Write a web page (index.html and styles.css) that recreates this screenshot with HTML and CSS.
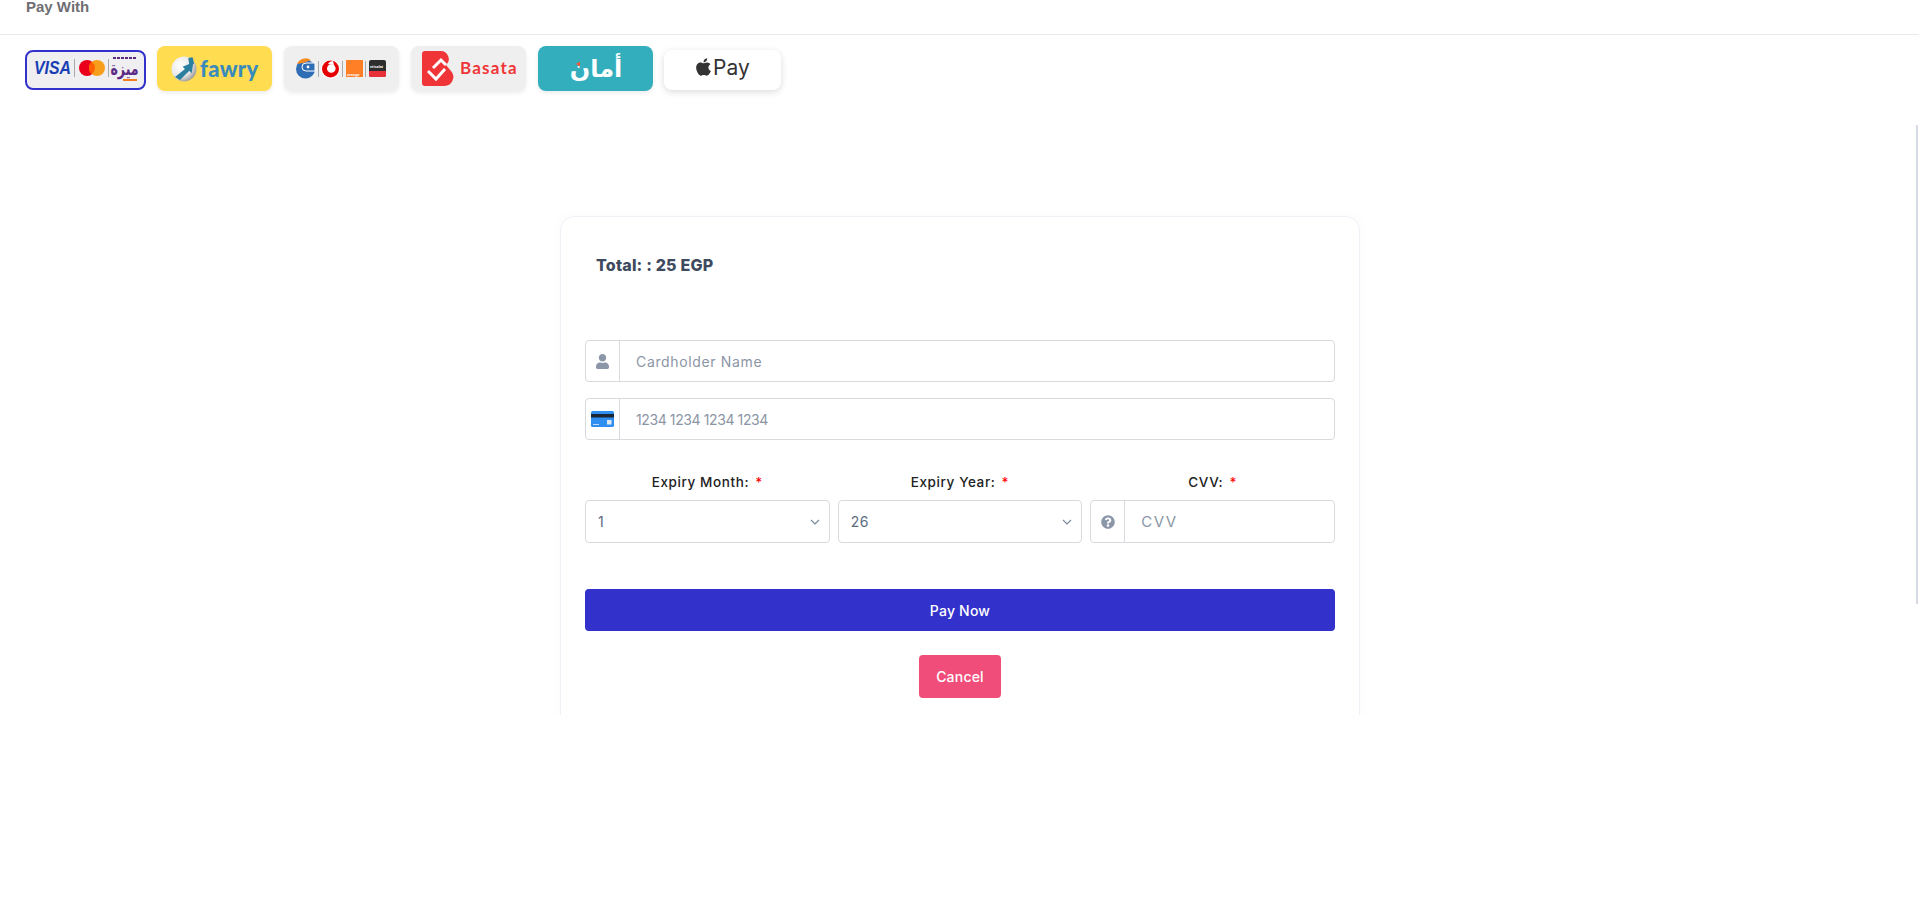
FILE: index.html
```html
<!DOCTYPE html>
<html lang="en">
<head>
    <meta charset="UTF-8">
    <meta name="viewport" content="width=device-width, initial-scale=1.0">
    <title>Pay With</title>
    <link rel="stylesheet" href="styles.css">
</head>
<body>
    <header class="top-bar">Pay With</header>

    <div class="methods">
        <div class="tile tile-cards">
            <svg viewBox="0 0 117 36">
                <text class="visa-text" x="7" y="22" textLength="37" lengthAdjust="spacingAndGlyphs">VISA</text>
                <rect x="47" y="7" width="1" height="18" fill="#aaa"/>
                <circle cx="60" cy="16" r="8" fill="#eb001b"/>
                <circle cx="70" cy="16" r="8" fill="#f79e1b"/>
                <path d="M65 9.800a8 8 0 0 1 0 12.400a8 8 0 0 1 0-12.400z" fill="#ff5f00"/>
                <rect x="81" y="7" width="1" height="18" fill="#aaa"/>
                <path d="M86 6h24" stroke="#5b2a86" stroke-width="2" stroke-dasharray="3 1"/>
                <text class="meeza-text" transform="translate(97.500 23) scale(0.9 1.3)">ميزة</text>
                <rect x="96" y="27" width="14" height="2" fill="#f47b20"/>
            </svg>
        </div>

        <div class="tile tile-fawry">
            <svg viewBox="0 0 115 45">
                <defs>
                    <radialGradient id="globe" cx="35%" cy="35%" r="75%">
                        <stop offset="0" stop-color="#fff"/>
                        <stop offset="0.6" stop-color="#e8e8e8"/>
                        <stop offset="1" stop-color="#8d8d8d"/>
                    </radialGradient>
                </defs>
                <circle cx="27" cy="23" r="12.500" fill="url(#globe)"/>
                <path d="M18 31l10-8-2.300-2.300 10.600-4.400-1.600 11-2.400-2.600-9.300 9.300z" fill="#2b7f9e"/>
                <path d="M31.300 12l4.400-.7 1.300 6.700-4.700.7z" fill="#2b7f9e"/>
                <text class="fawry-text" x="43" y="31">fawry</text>
            </svg>
        </div>

        <div class="tile tile-gray">
            <svg viewBox="0 0 115 45">
                <circle cx="21.500" cy="23" r="9.500" fill="#2f6db5"/>
                <path d="M13 18a9.500 9.500 0 0 1 14-4l-8 3z" fill="#f58a1f"/>
                <path d="M31 17v8h-9a4 4 0 0 1 0-8z" fill="#2f6db5" stroke="#fff" stroke-width="1"/>
                <circle cx="24" cy="21" r="1.400" fill="#fff"/>
                <rect x="34" y="15" width="1" height="16" fill="#aaa"/>
                <circle cx="46.500" cy="23" r="9.500" fill="#fff"/>
                <circle cx="46.500" cy="23" r="8.500" fill="#e60000"/>
                <circle cx="47.300" cy="22.500" r="4.300" fill="#fff"/>
                <path d="M44 18c1-2 3-3 5-3l1 4z" fill="#fff"/>
                <rect x="58" y="15" width="1" height="16" fill="#aaa"/>
                <rect x="62" y="14" width="17" height="17" fill="#ff7f27"/>
                <text class="mini-text" x="63" y="29.500">orange</text>
                <rect x="81" y="15" width="1" height="16" fill="#aaa"/>
                <rect x="85" y="14" width="17" height="17" rx="2" fill="#2d2d2d"/>
                <path d="M85 25h17v4a2 2 0 0 1-2 2H87a2 2 0 0 1-2-2z" fill="#e8303a"/>
                <text class="mini-text" x="86" y="21.500">etisalat</text>
            </svg>
        </div>

        <div class="tile tile-gray">
            <svg viewBox="0 0 115 45">
                <path d="M14 5h16a8 8 0 0 1 6 13l-1 1 5 6a9 9 0 0 1-7 15H14a3 3 0 0 1-3-3V8a3 3 0 0 1 3-3z" fill="#ef3537"/>
                <path d="M17 25l8 8 9-10M22 22l8-8 5 5" fill="none" stroke="#fff" stroke-width="3"/>
                <text class="basata-text" x="49" y="28">Basata</text>
            </svg>
        </div>

        <div class="tile tile-aman">
            <svg viewBox="0 0 115 45">
                <text class="aman-text" x="58" y="31">أمان</text>
                <path d="M38 18l4-2.500v5z" fill="#f0593e"/>
            </svg>
        </div>

        <div class="tile tile-apple">
            <svg viewBox="0 0 117 40">
                <svg x="31" y="7" width="17" height="20" viewBox="0 0 384 512">
                    <path d="M318.7 268.7c-.2-36.7 16.4-64.4 50-84.8-18.8-26.9-47.2-41.7-84.7-44.6-35.5-2.8-74.3 20.7-88.5 20.7-15 0-49.4-19.7-76.4-19.7C63.3 141.2 4 184.8 4 273.5q0 39.3 14.4 81.2c12.8 36.7 59 126.7 107.2 125.2 25.2-.6 43-17.9 75.8-17.9 31.8 0 48.3 17.9 76.4 17.9 48.6-.7 90.4-82.5 102.6-119.3-65.2-30.7-61.7-90-61.7-91.9zm-56.6-164.2c27.3-32.4 24.8-61.9 24-72.5-24.1 1.4-52 16.4-67.9 34.9-17.5 19.8-27.8 44.3-25.6 71.9 26.1 2 49.9-11.4 69.5-34.3z" fill="#333"/>
                </svg>
                <text class="apple-text" x="49" y="25">Pay</text>
            </svg>
        </div>
    </div>

    <main class="scroll-area">
        <form class="card">
            <div class="total">Total: : 25 EGP</div>

            <div class="input-group">
                <span class="addon">
                    <svg class="icon-user" viewBox="0 0 448 512"><path d="M224 256c70.700 0 128-57.300 128-128S294.700 0 224 0 96 57.300 96 128s57.300 128 128 128zm89.600 32h-16.700c-22.200 10.200-46.900 16-72.900 16s-50.600-5.800-72.900-16h-16.700C60.200 288 0 348.200 0 422.400V464c0 26.500 21.500 48 48 48h352c26.500 0 48-21.500 48-48v-41.600c0-74.200-60.200-134.400-134.400-134.400z"/></svg>
                </span>
                <input type="text" placeholder="Cardholder Name">
            </div>

            <div class="input-group">
                <span class="addon">
                    <svg class="icon-card" viewBox="0 0 23 16">
                        <rect width="23" height="16" rx="1.500" fill="#2e8ff0"/>
                        <rect y="3" width="23" height="3.500" fill="#1c2733"/>
                        <rect x="16" y="9" width="4.500" height="4.500" fill="#dfeaf6"/>
                        <rect x="2" y="13" width="6" height="1" fill="#bcdcfa"/>
                    </svg>
                </span>
                <input type="text" class="input-number" placeholder="1234 1234 1234 1234">
            </div>

            <div class="expiry-row">
                <div class="field">
                    <label>Expiry Month: <span class="req">*</span></label>
                    <div class="select-wrap">
                        <select><option>1</option></select>
                        <svg class="chevron" viewBox="0 0 10 6"><path d="M1 1l4 4 4-4" fill="none" stroke="#76869c" stroke-width="1.100"/></svg>
                    </div>
                </div>
                <div class="field">
                    <label>Expiry Year: <span class="req">*</span></label>
                    <div class="select-wrap">
                        <select><option>26</option></select>
                        <svg class="chevron" viewBox="0 0 10 6"><path d="M1 1l4 4 4-4" fill="none" stroke="#76869c" stroke-width="1.100"/></svg>
                    </div>
                </div>
                <div class="field">
                    <label>CVV: <span class="req">*</span></label>
                    <div class="input-group cvv">
                        <span class="addon">
                            <svg class="icon-help" viewBox="0 0 512 512"><path d="M504 256c0 136.997-111.043 248-248 248S8 392.997 8 256C8 119.083 119.043 8 256 8s248 111.083 248 248zM262.655 90c-54.497 0-89.255 22.957-116.549 63.758-3.536 5.286-2.353 12.415 2.715 16.258l34.699 26.310c5.205 3.947 12.621 3.008 16.665-2.122 17.864-22.658 30.113-35.797 57.303-35.797 20.429 0 45.698 13.148 45.698 32.958 0 14.976-12.363 22.667-32.534 33.976C247.128 238.528 216 254.941 216 296v4c0 6.627 5.373 12 12 12h56c6.627 0 12-5.373 12-12v-1.333c0-28.462 83.186-29.647 83.186-106.667 0-58.002-60.165-102-116.531-102zM256 338c-25.365 0-46 20.635-46 46 0 25.364 20.635 46 46 46s46-20.636 46-46c0-25.365-20.635-46-46-46z"/></svg>
                        </span>
                        <input type="text" placeholder="CVV">
                    </div>
                </div>
            </div>

            <button type="button" class="btn-pay">Pay Now</button>
            <button type="button" class="btn-cancel">Cancel</button>
        </form>
        <div class="scroll-thumb"></div>
    </main>
</body>
</html>
```

FILE: styles.css
```css
body {
    margin: 0;
    background: #fff;
    font-family: Inter, "Open Sans", sans-serif;
}
.top-bar {
    height: 34px;
    padding-left: 26px;
    border-bottom: 1px solid #e9e9e9;
    font-family: "Liberation Sans", Arial, sans-serif;
    font-size: 15px;
    font-weight: bold;
    line-height: 14px;
    color: #6e6e72;
}
.methods {
    display: flex;
    align-items: flex-start;
    gap: 12px;
    height: 90px;
    padding: 11px 0 0 25px;
    box-sizing: border-box;
}
.tile {
    width: 115px;
    height: 45px;
    border-radius: 8px;
    box-sizing: border-box;
    box-shadow: 0 2px 4px rgba(0,0,0,0.08);
    overflow: hidden;
}
.tile > svg {
    display: block;
    width: 100%;
    height: 100%;
}
.tile-cards {
    width: 121px;
    height: 40px;
    margin: 4px -1px 0 0;
    background: #efeff1;
    border: 2px solid #3331cb;
    box-shadow: none;
}
.tile-fawry { background: #ffdc50; }
.tile-gray { background: #efefef; }
.tile-aman { background: #33aebc; }
.tile-apple {
    width: 117px;
    height: 40px;
    margin: 4px 0 0 -1px;
    background: #fff;
    box-shadow: 0 2px 7px rgba(0,0,0,0.14);
}
.visa-text {
    font: italic bold 18px "Liberation Sans", sans-serif;
    fill: #1a3fb5;
}
.meeza-text {
    font: bold 14px "DejaVu Sans", sans-serif;
    fill: #5b2a86;
    text-anchor: middle;
}
.fawry-text {
    font: 900 22px Lato, sans-serif;
    fill: #3a8bbd;
    letter-spacing: 0.3px;
}
.mini-text {
    font: bold 3.800px "Liberation Sans", sans-serif;
    fill: #fff;
}
.basata-text {
    font: bold 17px Lato, sans-serif;
    fill: #ef3537;
    letter-spacing: 1.200px;
}
.aman-text {
    font: bold 24px "DejaVu Sans", sans-serif;
    fill: #fff;
    text-anchor: middle;
}
.apple-text {
    font: 21px Inter, sans-serif;
    fill: #333;
}

.scroll-area {
    position: relative;
    display: flex;
    justify-content: center;
    height: 590px;
    padding: 91px 0 0 1px;
    box-sizing: border-box;
    overflow: hidden;
}
.scroll-thumb {
    position: absolute;
    top: 0;
    right: 1px;
    width: 2px;
    height: 479px;
    background: #d6dae3;
}
.card {
    width: 800px;
    height: 600px;
    padding: 38px 24px 0;
    border: 1px solid #eff1f7;
    border-radius: 14px;
    box-sizing: border-box;
    box-shadow: 0 0 12px rgba(90,100,160,0.03);
    flex-shrink: 0;
}
.total {
    margin: 0 0 65px 11px;
    font-size: 16px;
    font-weight: 800;
    line-height: 20px;
    letter-spacing: 0.2px;
    color: #3e4a5e;
}
.input-group {
    display: flex;
    height: 42px;
    margin-bottom: 16px;
    border: 1px solid #d9dadd;
    border-radius: 4px;
    box-sizing: border-box;
}
.addon {
    display: flex;
    align-items: center;
    justify-content: center;
    width: 33px;
    border-right: 1px solid #d9dadd;
    flex-shrink: 0;
}
.icon-user {
    width: 13px;
    height: 15px;
    fill: #8b97a8;
}
.icon-card {
    width: 23px;
    height: 16px;
}
.icon-help {
    width: 14px;
    height: 14px;
    fill: #8b97a8;
}
input {
    flex: 1;
    min-width: 0;
    padding: 0 16px;
    border: none;
    background: none;
    outline: none;
    font-family: inherit;
    font-size: 14px;
    letter-spacing: 0.65px;
}
.input-number {
    letter-spacing: -0.4px;
}
.cvv input {
    font-size: 15px;
    letter-spacing: 1.500px;
}
input::placeholder {
    color: #8b95a5;
    opacity: 1;
}
.expiry-row {
    display: grid;
    grid-template-columns: repeat(3, minmax(0, 1fr));
    gap: 8px;
    margin: 33px 0 46px;
}
.field label {
    display: block;
    margin-bottom: 9px;
    font-size: 13.500px;
    font-weight: 500;
    line-height: 18px;
    letter-spacing: 0.6px;
    text-align: center;
    color: #222;
}
.req {
    margin-left: 2px;
    color: #f00;
}
.select-wrap {
    position: relative;
}
select {
    display: block;
    width: 100%;
    height: 43px;
    padding: 0 12px;
    border: 1px solid #d9dadd;
    border-radius: 4px;
    background: #fff;
    appearance: none;
    font-family: inherit;
    font-size: 14px;
    letter-spacing: 0.5px;
    color: #5c6b80;
}
.chevron {
    position: absolute;
    top: 19px;
    right: 10px;
    width: 10px;
    height: 6px;
    pointer-events: none;
}
.cvv {
    height: 43px;
    margin-bottom: 0;
}
button {
    display: block;
    border: none;
    border-radius: 4px;
    color: white;
    font-family: inherit;
    font-size: 14px;
    font-weight: 500;
    letter-spacing: 0.2px;
    cursor: pointer;
}
.btn-pay {
    width: 100%;
    height: 42px;
    margin-bottom: 24px;
    background: #3331cb;
}
.btn-cancel {
    width: 82px;
    height: 43px;
    margin: 0 auto;
    background: #f04d7b;
}
```
